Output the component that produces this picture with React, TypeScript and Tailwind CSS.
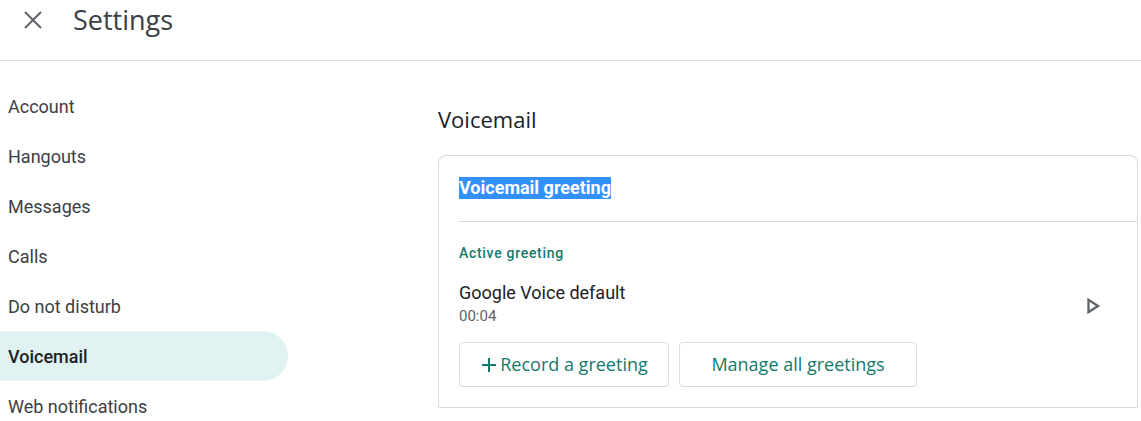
import React from 'react'

const navItems = ['Account', 'Hangouts', 'Messages', 'Calls', 'Do not disturb', 'Voicemail', 'Web notifications']

function App() {
  return (
    <main className="w-[1141px] h-[421px] overflow-hidden bg-white font-['Roboto',sans-serif] text-[#3c4043]">
      <header className="flex items-center h-[61px] border-b border-[#e0e0e0] pb-[21px]">
        <button className="ml-[24px] w-[18px] h-[18px] flex items-center justify-center text-[#5f6368]">
          <svg width="18" height="18" viewBox="0 0 18 18" fill="none" stroke="currentColor" strokeWidth="2">
            <line x1="1" y1="1" x2="17" y2="17" />
            <line x1="17" y1="1" x2="1" y2="17" />
          </svg>
        </button>
        <h1 className="ml-[31px] text-[27px] leading-none font-['Open_Sans',sans-serif] text-[#3c4043]">Settings</h1>
      </header>

      <div className="flex">
        <nav className="w-[288px] flex flex-col pt-[20px]">
          {navItems.map((item) => (
            <div
              key={item}
              className={
                item === 'Voicemail'
                  ? 'h-[50px] flex items-center pl-[8px] rounded-r-full bg-[#e0f2f1] font-medium text-[18px] text-[#202124]'
                  : 'h-[50px] flex items-center pl-[8px] text-[18px]'
              }
            >
              {item}
            </div>
          ))}
        </nav>

        <section className="ml-[150px] flex-1 pt-[43px] pr-[3px]">
          <h2 className="text-[22px] leading-[30px] font-['Open_Sans',sans-serif] text-[#202124]">Voicemail</h2>
          <div className="mt-[21px] border border-[#dadce0] rounded-t-[8px] border-b-0">
            <div className="pl-[20px] pt-[21px]">
              <div className="h-[45px] border-b border-[#dadce0]">
                <span className="bg-[#3390ff] text-white font-bold text-[18px] leading-[22px] inline-block">Voicemail greeting</span>
              </div>
            </div>
            <div className="px-[20px] pt-[21px] pb-[20px] border-b border-[#dadce0]">
              <div className="text-[14px] leading-[20px] font-medium tracking-[0.7px] text-[#137a6b]">Active greeting</div>
              <div className="flex items-center justify-between mt-[18px]">
                <div>
                  <div className="text-[18px] leading-[24px] text-[#202124]">Google Voice default</div>
                  <div className="mt-[1px] text-[15px] leading-[20px] text-[#5f6368]">00:04</div>
                </div>
                <svg width="28" height="28" viewBox="0 0 24 24" className="mr-[11px] mt-[5px] text-[#5f6368]" fill="currentColor">
                  <path d="M10 8.64L15.27 12 10 15.36V8.64M8 5v14l11-7L8 5z" />
                </svg>
              </div>
              <div className="flex gap-[10px] mt-[16px]">
                <button className="w-[210px] h-[45px] border border-[#dadce0] rounded-[4px] flex items-center justify-center text-[#137a6b] text-[18px] font-medium font-['Open_Sans',sans-serif]">
                  <svg width="18" height="18" viewBox="0 0 18 18" stroke="currentColor" strokeWidth="2" className="mr-[2px]">
                    <line x1="9" y1="2" x2="9" y2="16" />
                    <line x1="2" y1="9" x2="16" y2="9" />
                  </svg>
                  Record a greeting
                </button>
                <button className="w-[238px] h-[45px] border border-[#dadce0] rounded-[4px] flex items-center justify-center text-[#137a6b] text-[18px] font-medium font-['Open_Sans',sans-serif]">
                  Manage all greetings
                </button>
              </div>
            </div>
          </div>
        </section>
      </div>
    </main>
  )
}

export default App
